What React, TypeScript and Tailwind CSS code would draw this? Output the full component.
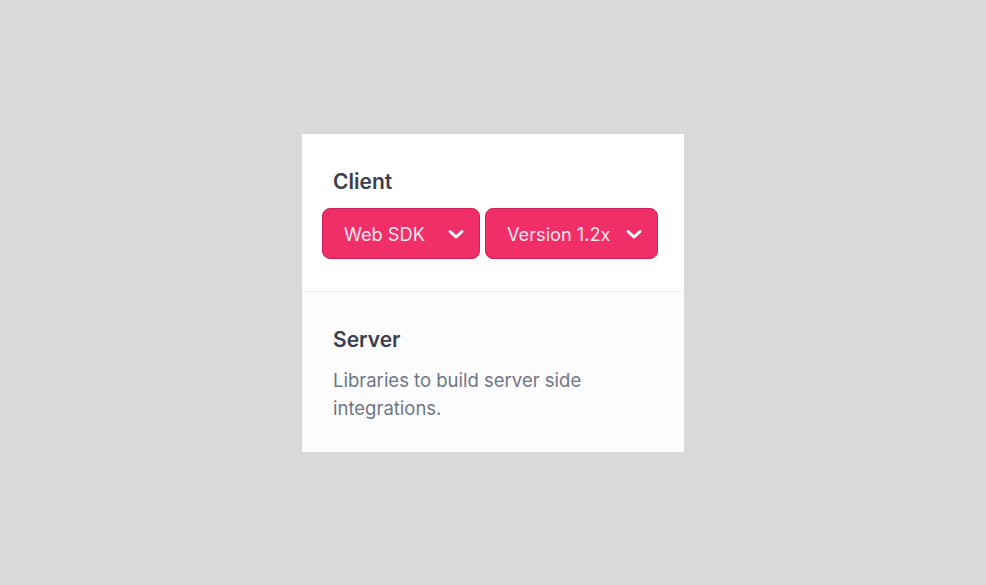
import React from "react";

function Chevron() {
  return (
    <svg width="18" height="18" viewBox="0 0 18 18" fill="none" aria-hidden="true">
      <polyline
        points="3,6.5 9,12 15,6.5"
        stroke="currentColor"
        strokeWidth="3"
        strokeLinecap="round"
        strokeLinejoin="round"
      />
    </svg>
  );
}

function Select({ label, width }: { label: string; width: string }) {
  return (
    <button
      className={`flex h-[51px] items-center justify-between rounded-[8px] border border-[#d0215a] bg-[#f02e67] pl-[21px] pr-[14px] text-[18.2px] text-[#ffe6ee] ${width}`}
    >
      <span className="pt-[3px]">{label}</span>
      <span className="pt-[1px] text-white">
        <Chevron />
      </span>
    </button>
  );
}

export default function App() {
  return (
    <div
      className="flex h-[585px] w-full items-center justify-center bg-[#d9d9d9]"
      style={{ fontFamily: "Inter, 'Noto Sans', sans-serif" }}
    >
      <div className="w-[382px] overflow-hidden bg-white">
        <div className="px-[20px] pb-[32px] pt-[34px]">
          <h2 className="ml-[11px] text-[21px] font-semibold leading-[28px] text-[#3b3e4f]">Client</h2>
          <div className="mt-[12px] flex gap-[5px]">
            <Select label="Web SDK" width="w-[158px]" />
            <Select label="Version 1.2x" width="w-[173px]" />
          </div>
        </div>
        <div className="border-t border-[#eef0f3] bg-[#fcfcfd] px-[31px] pb-[30px] pt-[34px]">
          <h2 className="text-[21px] font-semibold leading-[28px] text-[#3b3e4f]">Server</h2>
          <p className="mt-[12px] text-[18.5px] leading-[28px] text-[#6f7585]">
            Libraries to build server side
            <br />
            integrations.
          </p>
        </div>
      </div>
    </div>
  );
}
